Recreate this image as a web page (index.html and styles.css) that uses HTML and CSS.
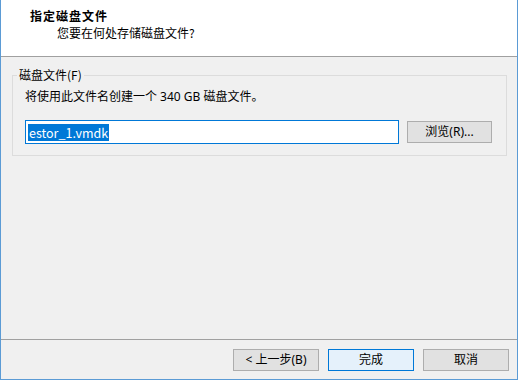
FILE: index.html
```html
<!DOCTYPE html>
<html lang="zh-CN">
<head>
    <meta charset="UTF-8">
    <title>新建虚拟机向导</title>
    <link rel="stylesheet" href="styles.css">
</head>
<body>
    <div class="wizard">
        <div class="wizard-header">
            <div class="title">指定磁盘文件</div>
            <div class="subtitle">您要在何处存储磁盘文件?</div>
        </div>

        <div class="wizard-body">
            <fieldset class="group">
                <legend>磁盘文件(F)</legend>
                <p class="hint">将使用此文件名创建一个 340 GB 磁盘文件。</p>
                <div class="file-row">
                    <div class="text-input"><span class="selected">estor_1.vmdk</span></div>
                    <button class="btn btn-browse">浏览(R)...</button>
                </div>
            </fieldset>
        </div>

        <div class="wizard-footer">
            <button class="btn">&lt; 上一步(B)</button>
            <button class="btn btn-default">完成</button>
            <button class="btn">取消</button>
        </div>
    </div>
</body>
</html>
```

FILE: styles.css
```css
/* wizard dialog */
body { margin: 0; font-family: "Noto Sans", "Noto Sans CJK SC", sans-serif; font-size: 12px; color: #000; background: #f0f0f0; }
.wizard { width: 518px; height: 380px; box-sizing: border-box; display: flex; flex-direction: column; background: #f0f0f0; border-left: 1px solid #5b9bd5; border-right: 1px solid #5b9bd5; border-bottom: 1px solid #5b9bd5; }

.wizard-header { height: 57px; box-sizing: border-box; background: #fff; border-bottom: 1px solid #a0a0a0; padding-top: 8px; flex: none; }
.title { font-family: "Noto Sans CJK SC", sans-serif; font-weight: 700; font-size: 12px; line-height: 16px; padding-left: 29px; letter-spacing: 1px; }
.subtitle { font-family: "Noto Sans CJK SC", sans-serif; line-height: 16px; margin-top: 1px; padding-left: 56px; }

.wizard-body { flex: 1; padding: 11px 10px 0 11px; }
.group { margin: 0; padding: 0 12px 11px 12px; border: 1px solid #dcdcdc; min-width: 0; }
.group legend { font-family: "Noto Sans CJK SC", sans-serif; line-height: 14px; padding: 0 2px; margin-left: -8px; }
.hint { margin: 7px 0 0; line-height: 16px; }

.file-row { display: flex; align-items: center; gap: 8px; margin-top: 15px; }
.text-input { width: 374px; height: 24px; box-sizing: border-box; border: 1px solid #0078d7; background: #fff; padding: 2px 2px; display: flex; align-items: center; }
.selected { font-family: "Noto Sans CJK SC", sans-serif; font-size: 12.5px; background: #0078d7; color: #fff; line-height: 17px; padding: 0 1px; }

.btn { font-family: "Noto Sans", "Noto Sans CJK SC", sans-serif; font-size: 12px; color: #000; height: 22px; width: 86px; box-sizing: border-box; background: #e1e1e1; border: 1px solid #adadad; padding: 0; line-height: 18px; }
.btn-browse { width: 85px; }
.btn-default { background: #e5f1fb; border-color: #0078d7; }

.wizard-footer { flex: none; height: 40px; box-sizing: border-box; border-top: 1px solid #a0a0a0; padding: 9px 8px 0 0; display: flex; justify-content: flex-end; gap: 9px; }
```
